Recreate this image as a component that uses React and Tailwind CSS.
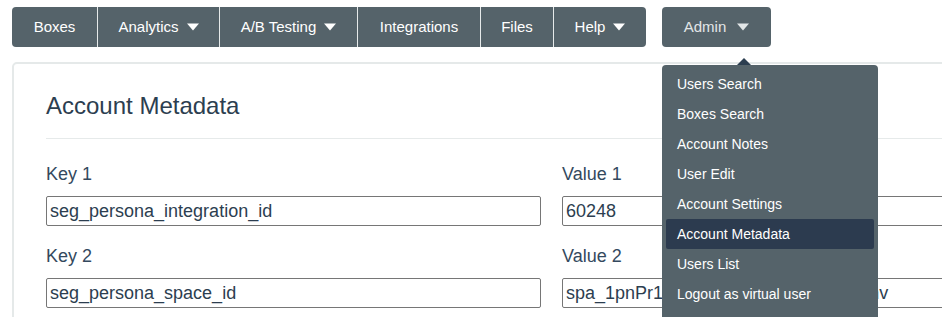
import React from "react";

const Caret = () => (
  <svg width="12" height="8" viewBox="0 0 12 8" className="ml-[8px] inline-block">
    <path d="M0 0.5 H12 L6 7.5 Z" fill="currentColor" />
  </svg>
);

const navItems = [
  { label: "Boxes", w: "w-[85px]" },
  { label: "Analytics", w: "w-[122px]", caret: true },
  { label: "A/B Testing", w: "w-[138px]", caret: true },
  { label: "Integrations", w: "w-[123px]" },
  { label: "Files", w: "w-[73px]" },
  { label: "Help", w: "w-[93px]", caret: true },
];

const menu = [
  "Users Search",
  "Boxes Search",
  "Account Notes",
  "User Edit",
  "Account Settings",
  "Account Metadata",
  "Users List",
  "Logout as virtual user",
];

export default function App() {
  return (
    <div
      className="relative w-[942px] h-[317px] overflow-hidden bg-white"
      style={{ fontFamily: '"Liberation Sans", Arial, sans-serif' }}
    >
      <div className="flex pt-[7px] pl-[12px]">
        <div className="flex h-[40px] rounded-[4px] bg-[#55636a] overflow-hidden">
          {navItems.map((it, i) => (
            <div
              key={it.label}
              className={`${it.w} flex items-center justify-center text-[15px] text-white ${
                i > 0 ? "border-l border-[#e6eaea]" : ""
              }`}
            >
              {it.label}
              {it.caret && <Caret />}
            </div>
          ))}
        </div>
        <div className="ml-[16px] w-[109px] h-[40px] rounded-[4px] bg-[#55636a] flex items-center justify-center text-[15px] text-[#e2e6e7]">
          Admin
          <span className="ml-[3px] flex">
            <Caret />
          </span>
        </div>
      </div>

      <div className="mt-[15px] ml-[12px] w-[1000px] h-[300px] border-2 border-[#e5e9e9] rounded-[5px] px-[32px] pt-[27px]">
        <h2 className="text-[24px] leading-[30px] text-[#2c3e50] font-normal">Account Metadata</h2>
        <div className="mt-[17px] border-t border-[#e6eaea]"></div>
        <div className="grid grid-cols-[495px_495px] gap-x-[21px] mt-[25px]">
          {[
            ["Key 1", "seg_persona_integration_id", "Value 1", "60248"],
            ["Key 2", "seg_persona_space_id", "Value 2", "spa_1pnPr1GkLqZ8wXbT4nRs2VfyHmv"],
          ].map(([k, kv, v, vv]) => (
            <React.Fragment key={k}>
              <div className="mb-[20px]">
                <div className="text-[18px] leading-[20px] text-[#34495e]">{k}</div>
                <div className="mt-[12px] h-[30px] border border-[#767676] rounded-[2px] flex items-center px-[3px] text-[18px] text-[#2c3e50]">
                  {kv}
                </div>
              </div>
              <div className="mb-[20px]">
                <div className="text-[18px] leading-[20px] text-[#34495e]">{v}</div>
                <div className="mt-[12px] h-[30px] border border-[#767676] rounded-[2px] flex items-center px-[3px] text-[18px] text-[#2c3e50] whitespace-nowrap overflow-hidden">
                  {vv}
                </div>
              </div>
            </React.Fragment>
          ))}
        </div>
      </div>

      <div className="absolute left-[737px] top-[58px] w-0 h-0 border-l-[7px] border-r-[7px] border-b-[7px] border-l-transparent border-r-transparent border-b-[#2c3e50]"></div>
      <div className="absolute left-[662px] top-[65px] w-[216px] h-[270px] bg-[#55636a] rounded-[4px] pt-[4px] px-[4px]">
        {menu.map((m) => (
          <div
            key={m}
            className={`h-[30px] flex items-center pl-[11px] text-[14px] text-white rounded-[2px] ${
              m === "Account Metadata" ? "bg-[#2c3b4f]" : ""
            }`}
          >
            {m}
          </div>
        ))}
      </div>
    </div>
  );
}
